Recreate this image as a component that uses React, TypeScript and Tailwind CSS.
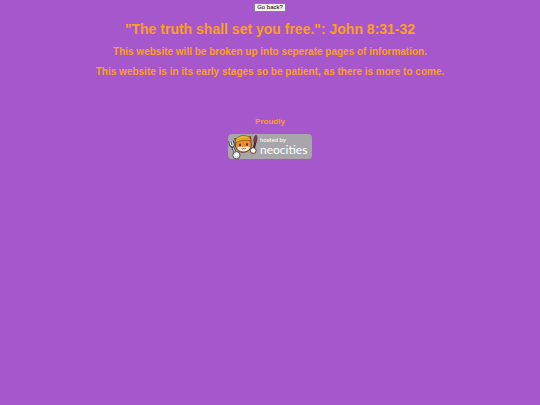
import React from "react";

/* cat with a yellow cap, a fork and a paintbrush */
const NeocitiesCat: React.FC = () => (
  <svg viewBox="0 0 32 26" className="h-[26px] w-8 shrink-0" aria-hidden="true">
    {/* fork */}
    <path d="M4 12 8 20" stroke="#33303a" strokeWidth="2.6" strokeLinecap="round" />
    <path d="M4 12 8 20" stroke="#c9ccd6" strokeWidth="1.2" />
    <path d="M.6 7 1.5 11.5 4.5 13.5 6.8 11 5 6.5" fill="#d4d6de" stroke="#454452" strokeWidth="1.1" />
    <path d="M2.8 7 4 11" stroke="#454452" strokeWidth=".9" />
    {/* paintbrush */}
    <path d="M25 18 27.3 8" stroke="#3b2a33" strokeWidth="2.2" strokeLinecap="round" />
    <path d="M26.2 8.5c-1-3 .2-6 1.8-7.3 1.4 2 1.2 5-.3 7.7z" fill="#a32c46" stroke="#40222f" strokeWidth=".7" />
    {/* head */}
    <path d="M8 9 6.6 4.5 10 5 20 3.5 22.5 2.5 23 8c1.3 4-.6 8-4 9.5-4.6 1.7-8.8.3-10.6-2.6C7.2 12.6 7.4 10.8 8 9z" fill="#f08a35" stroke="#5b2d1c" strokeWidth=".9" />
    <path d="M9.3 14c1.6-1.5 3.6-1.9 5.4-.8l.8-1 .9.8c2-1 4.3-.7 5.8.3-1 2.3-3.4 4-6.4 4-2.8 0-5.3-1-6.5-3.3z" fill="#fff3df" />
    <path d="M7 9C7 4.4 11 1.6 15.4 1.6c4.2 0 7 1.8 7.4 5.2-5-1.2-10.6-.8-15.8 2.2z" fill="#f5bd31" stroke="#76501e" strokeWidth=".8" />
    <path d="M8.5 6.3c4-2 9-2.8 13.4-1.2" fill="none" stroke="#c98a20" strokeWidth=".7" />
    <path d="M12 10.3v1.4M19 9.8v1.4" stroke="#2e1a16" strokeWidth="1.4" strokeLinecap="round" />
    <path d="M13.5 14.5c.7.9 1.6.8 2.1-.1.6.9 1.5.8 2.2 0" fill="none" stroke="#5b2d1c" strokeWidth=".8" />
    {/* paws */}
    <circle cx="8.4" cy="21.2" r="3.6" fill="#fff" stroke="#40343a" strokeWidth=".9" />
    <circle cx="25.2" cy="16.6" r="2.9" fill="#fff" stroke="#40343a" strokeWidth=".9" />
    <path d="M7.6 23.5v-1.3M9.5 23.5v-1.3M24.6 19v-1.2M26.2 19v-1.2" stroke="#e39a6a" strokeWidth=".7" />
  </svg>
);

const App: React.FC = () => (
  <main className="flex min-h-screen flex-col items-center bg-[#a757cc] pt-[3px] text-center font-['Liberation_Sans',Arial,sans-serif] font-bold text-[#fc9f1e]">
    <button
      type="button"
      className="border border-[#8b7b94] bg-[#efefef] px-[2px] text-[6px] leading-[7px] font-normal text-black"
    >
      Go back?
    </button>

    <h1 className="mt-[7px] text-[14px] leading-5">
      "The truth shall set you free.": John 8:31-32
    </h1>
    <h2 className="mt-[7px] text-[10px] leading-3">
      This website will be broken up into seperate pages of information.
    </h2>
    <h2 className="mt-2 text-[10px] leading-3">
      This website is in its early stages so be patient, as there is more to come.
    </h2>

    <h3 className="mt-10 text-[8px] leading-2">Proudly</h3>

    <a
      href="https://neocities.org"
      className="mt-2 flex h-[25px] w-[84px] items-center rounded bg-[#a8a6aa] text-white"
    >
      <NeocitiesCat />
      <span className="flex flex-col text-left font-[Lato,sans-serif] font-normal whitespace-nowrap">
        <span className="text-[6px] leading-[7px]">hosted by</span>
        <span className="text-[12px] leading-[14px]">neocities</span>
      </span>
    </a>
  </main>
);

export default App;
